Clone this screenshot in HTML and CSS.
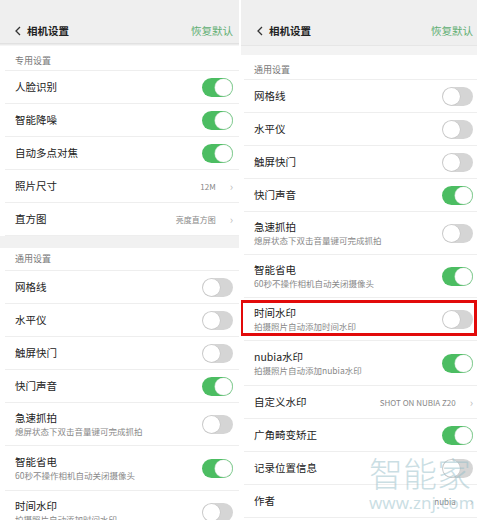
FILE: index.html
```html
<!DOCTYPE html>
<html lang="zh">
<head>
<meta charset="utf-8">
<link rel="stylesheet" href="styles.css">
</head>
<body>
<div class="page">
  <section class="screen left">
    <header class="hdr">
      <div class="hdr-title"><svg class="back" width="6" height="10" viewBox="0 0 6 10"><polyline points="5,1 1,5 5,9" fill="none" stroke="#333" stroke-width="1.3"/></svg><span>相机设置</span></div>
      <span class="reset">恢复默认</span>
    </header>
    <div class="shadow"></div>
    <div class="label">专用设置</div>
    <div class="row"><span class="t">人脸识别</span><span class="tg on"></span></div>
    <div class="row"><span class="t">智能降噪</span><span class="tg on"></span></div>
    <div class="row"><span class="t">自动多点对焦</span><span class="tg on"></span></div>
    <div class="row"><span class="t">照片尺寸</span><span class="val">12M<i class="chev">›</i></span></div>
    <div class="row"><span class="t">直方图</span><span class="val">亮度直方图<i class="chev">›</i></span></div>
    <div class="band"></div>
    <div class="label l2">通用设置</div>
    <div class="row"><span class="t">网格线</span><span class="tg"></span></div>
    <div class="row"><span class="t">水平仪</span><span class="tg"></span></div>
    <div class="row"><span class="t">触屏快门</span><span class="tg"></span></div>
    <div class="row"><span class="t">快门声音</span><span class="tg on"></span></div>
    <div class="row dbl"><div><div class="t">急速抓拍</div><div class="sub">熄屏状态下双击音量键可完成抓拍</div></div><span class="tg"></span></div>
    <div class="row dbl"><div><div class="t">智能省电</div><div class="sub">60秒不操作相机自动关闭摄像头</div></div><span class="tg on"></span></div>
    <div class="row dbl"><div><div class="t">时间水印</div><div class="sub">拍摄照片自动添加时间水印</div></div><span class="tg"></span></div>
  </section>
  <section class="screen right">
    <header class="hdr hdr-r">
      <div class="hdr-title"><svg class="back" width="6" height="10" viewBox="0 0 6 10"><polyline points="5,1 1,5 5,9" fill="none" stroke="#333" stroke-width="1.3"/></svg><span>相机设置</span></div>
      <span class="reset">恢复默认</span>
    </header>
    <div class="band-r"></div>
    <div class="label">通用设置</div>
    <div class="row"><span class="t">网格线</span><span class="tg"></span></div>
    <div class="row"><span class="t">水平仪</span><span class="tg"></span></div>
    <div class="row"><span class="t">触屏快门</span><span class="tg"></span></div>
    <div class="row"><span class="t">快门声音</span><span class="tg on"></span></div>
    <div class="row dbl"><div><div class="t">急速抓拍</div><div class="sub">熄屏状态下双击音量键可完成抓拍</div></div><span class="tg"></span></div>
    <div class="row dbl"><div><div class="t">智能省电</div><div class="sub">60秒不操作相机自动关闭摄像头</div></div><span class="tg on"></span></div>
    <div class="row dbl mark"><div><div class="t">时间水印</div><div class="sub">拍摄照片自动添加时间水印</div></div><span class="tg"></span></div>
    <div class="row dbl tall"><div><div class="t">nubia水印</div><div class="sub">拍摄照片自动添加nubia水印</div></div><span class="tg on"></span></div>
    <div class="row"><span class="t">自定义水印</span><span class="val">SHOT ON NUBIA Z20<i class="chev">›</i></span></div>
    <div class="row"><span class="t">广角畸变矫正</span><span class="tg on"></span></div>
    <div class="row"><span class="t">记录位置信息</span><span class="tg"></span></div>
    <div class="row"><span class="t">作者</span><span class="val">nubia<i class="chev">›</i></span></div>
    <div class="wm"><div class="wm-big">智能家</div><div class="wm-url">www.znj.com</div></div>
  </section>
</div>
</body>
</html>
```
FILE: styles.css
```css
* { box-sizing: border-box; margin: 0; padding: 0; }
html, body { width: 477px; height: 520px; overflow: hidden; background: #fff; }
body { font-family: "Noto Sans CJK SC", "Noto Sans", sans-serif; color: #222; }
.page { display: flex; gap: 2px; height: 520px; }
.screen { position: relative; overflow: hidden; height: 520px; background: #fff; }
.left { width: 239px; }
.right { width: 236px; }

.hdr { height: 43px; background: #efefef; display: flex; align-items: flex-end; justify-content: space-between; padding: 0 6px 4px 15px; }
.hdr-r { height: 45px; padding: 0 4px 6px 16px; }
.hdr-title { display: flex; align-items: center; gap: 6px; font-size: 10.5px; font-weight: 700; line-height: 16px; color: #222; }
.back { display: block; }
.reset { font-size: 10.5px; line-height: 16px; color: #5fae72; }
.shadow { height: 3px; background: linear-gradient(#dcdcdc, #fafafa); }
.band-r { height: 10px; background: #f3f3f3; border-top: 1px solid #e6e6e6; }
.band { height: 12px; background: #f1f1f1; }

.label { height: 25px; margin-left: 5px; padding: 9px 0 0 10px; font-size: 9px; line-height: 12px; color: #777; border-bottom: 1px solid #eee; }
.l2 { height: 23px; padding-top: 5px; }
.right .label { margin-left: 3px; padding-left: 10px; }

.row { display: flex; align-items: center; justify-content: space-between; height: 33px; margin-left: 5px; padding: 0 6px 0 10px; border-bottom: 1px solid #eee; }
.right .row { margin-left: 3px; padding: 0 4px 0 10px; }
.row.dbl { height: 43px; }
.left .row.dbl:nth-last-child(2) { height: 45px; }
.right .row.dbl:nth-of-type(5) { height: 44px; }
.row.tall { height: 45px; }
.t { font-size: 10.5px; line-height: 14px; color: #222; }
.sub { font-size: 8.5px; line-height: 11px; color: #888; margin-top: 1px; }
.val { display: flex; align-items: center; gap: 14px; font-size: 8px; color: #888; }
.chev { font-style: normal; font-size: 11px; color: #bbb; line-height: 10px; }

.tg { position: relative; flex: none; width: 31px; height: 19px; border-radius: 10px; background: #d5d5d5; }
.tg::after { content: ""; position: absolute; top: 1px; left: 1px; width: 17px; height: 17px; border-radius: 50%; background: #fff; box-shadow: 0 0 0 0.6px #c4c4c4; }
.tg.on { background: #4cbd62; }
.tg.on::after { left: 13px; box-shadow: 0 0 0 0.6px #b8d9bf; }

.mark { position: relative; }
.mark::after { content: ""; position: absolute; left: -4px; right: 0; top: 2px; bottom: 4px; border: 3px solid #e20a0a; }

.wm { position: absolute; left: 128px; top: 455px; color: rgba(150, 190, 200, 0.5); pointer-events: none; }
.wm-big { font-size: 34px; line-height: 36px; font-weight: 300; }
.wm-url { font-family: "Noto Sans", sans-serif; font-size: 17px; line-height: 20px; margin-top: 2px; }
```
